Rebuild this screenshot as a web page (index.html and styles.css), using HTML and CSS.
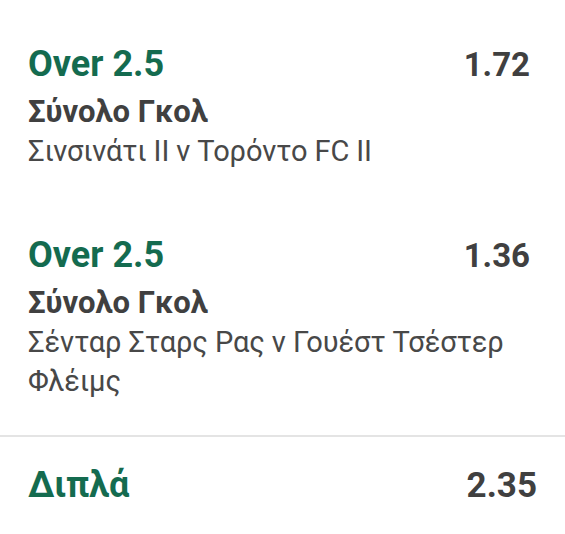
FILE: index.html
```html
<!DOCTYPE html>
<html lang="el">
<head>
    <meta charset="UTF-8">
    <meta name="viewport" content="width=device-width, initial-scale=1.0">
    <title>Κουπόνι</title>
    <link rel="stylesheet" href="styles.css">
</head>
<body>
    <div class="slip">
        <div class="selections">
            <div class="selection">
                <div class="selection-head">
                    <span class="pick">Over 2.5</span>
                    <span class="odds">1.72</span>
                </div>
                <div class="market">Σύνολο Γκολ</div>
                <div class="event">Σινσινάτι II ν Τορόντο FC II</div>
            </div>

            <div class="selection">
                <div class="selection-head">
                    <span class="pick">Over 2.5</span>
                    <span class="odds">1.36</span>
                </div>
                <div class="market">Σύνολο Γκολ</div>
                <div class="event">Σένταρ Σταρς Ρας ν Γουέστ Τσέστερ Φλέιμς</div>
            </div>
        </div>

        <div class="slip-total">
            <span class="total-label">Διπλά</span>
            <span class="total-odds">2.35</span>
        </div>
    </div>
</body>
</html>
```

FILE: styles.css
```css
:root {
    --green: #146b4f;
    --text-dark: #404040;
    --text-mid: #484848;
    --divider: #e4e4e4;
}

* {
    margin: 0;
    padding: 0;
    box-sizing: border-box;
}

body {
    font-family: Roboto, "Noto Sans", sans-serif;
    background: #ffffff;
    color: var(--text-dark);
}

.slip {
    width: 565px;
}

.selections {
    padding-bottom: 14px;
}

.selection {
    padding: 42px 35px 20px 28px;
}

.selection-head {
    display: flex;
    justify-content: space-between;
    align-items: baseline;
    height: 44px;
    line-height: 44px;
    margin-bottom: 6px;
}

.pick {
    font-size: 36px;
    font-weight: 700;
    color: var(--green);
}

.odds {
    font-size: 33px;
    font-weight: 700;
    color: var(--text-dark);
}

.market {
    font-size: 31px;
    font-weight: 700;
    line-height: 40px;
    color: var(--text-dark);
}

.event {
    font-size: 29px;
    letter-spacing: -0.1px;
    line-height: 39px;
    color: var(--text-mid);
}

.slip-total {
    display: flex;
    justify-content: space-between;
    align-items: baseline;
    border-top: 2px solid var(--divider);
    padding: 26px 28px 0 28px;
    line-height: 44px;
}

.total-label {
    font-size: 36px;
    font-weight: 700;
    color: var(--green);
}

.total-odds {
    font-size: 35px;
    font-weight: 700;
    color: var(--text-dark);
}
```
